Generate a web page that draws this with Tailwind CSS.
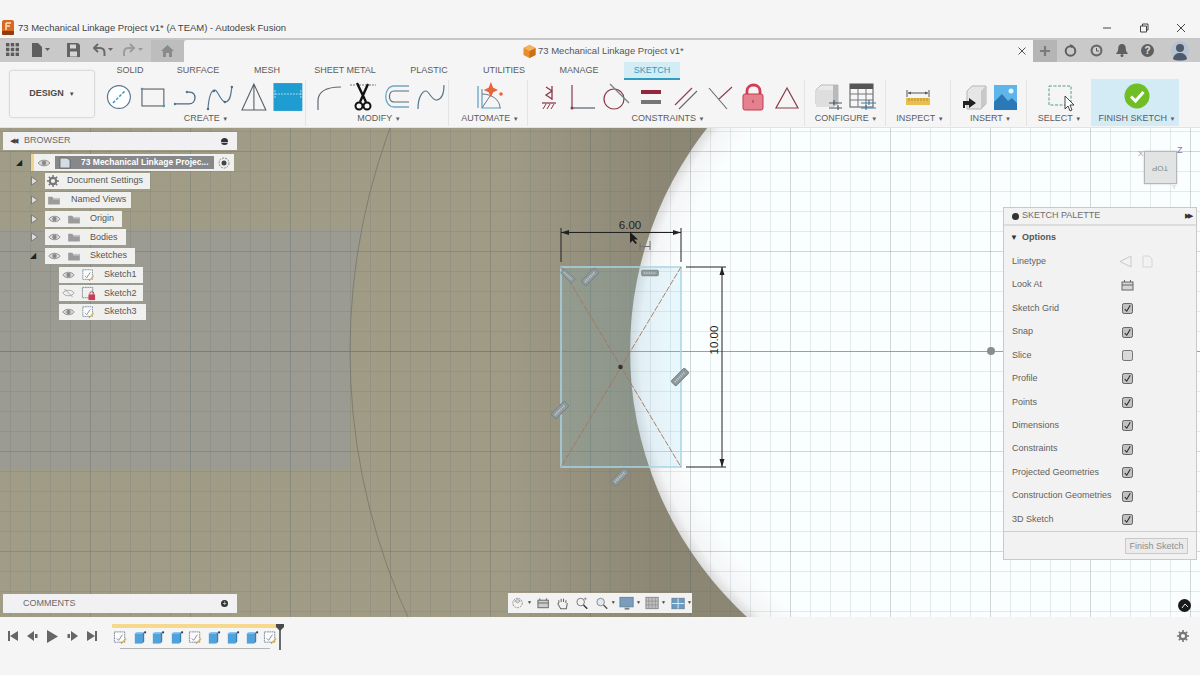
<!DOCTYPE html>
<html lang="en">
<head>
<meta charset="UTF-8">
<title>Autodesk Fusion</title>
<script src="https://cdn.jsdelivr.net/npm/@tailwindcss/browser@4"></script>
</head>
<body class="m-0 w-[1200px] h-[675px] overflow-hidden bg-[#f5f5f5] font-['Liberation_Sans',Arial,sans-serif] text-[#5a5a5a] flex flex-col">

<!-- shared symbols -->
<svg class="hidden">
  <defs>
    <symbol id="eye" viewBox="0 0 16 12"><path d="M1 6c3-4.500 11-4.500 14 0c-3 4.500-11 4.500-14 0z" fill="#d8d8d8" stroke="#8a8a8a" stroke-width="1.100"/><circle cx="8" cy="6" r="2.700" fill="#8a8a8a"/></symbol>
    <symbol id="folder" viewBox="0 0 16 12"><path d="M1 2h5l1 1.500h8v8H1z" fill="#9b9b9b"/><path d="M7 3.500h8v2H7z" fill="#c4c4c4"/></symbol>
    <symbol id="sk" viewBox="0 0 16 16"><rect x="1.500" y="2" width="11" height="11" fill="#fbfbfb" stroke="#7d8b99" stroke-dasharray="2 .6"/><path d="M4 9l2 2 4-6" fill="none" stroke="#7d8b99"/><path d="M9 13l4.500-4.500 1 1L10 14z" fill="#e4b44a"/><path d="M9 13l-.5 1.500L10 14z" fill="#444"/></symbol>
    <symbol id="cb" viewBox="0 0 12 12"><rect x=".5" y=".5" width="11" height="11" rx="2" fill="#c2c2c2" stroke="#555"/><path d="M3 6.500l2.200 2.500L9 2.500" fill="none" stroke="#222" stroke-width="1.100"/></symbol>
    <symbol id="cube" viewBox="0 0 16 16"><path d="M3 3.500h8v11H3z" fill="#4fa3dc"/><path d="M11 3.500l2-1.500v10.500l-2 2z" fill="#2f7fb8"/><path d="M3 3.500L5 2h8l-2 1.500z" fill="#88c4ec"/><rect x="13" y="1.500" width="2" height="2" fill="#333"/></symbol>
    <symbol id="glyph" viewBox="0 0 20 8"><rect x=".5" y=".5" width="19" height="7" rx="1.500" fill="#8f9a9c" stroke="#7a8588"/><path d="M3 4h14" stroke="#c5cdd0" stroke-dasharray="1 1" stroke-width="2"/></symbol>
  </defs>
</svg>

<!-- title bar -->
<div class="h-[38px] shrink-0 flex items-end pb-[3px] pl-[2px] pr-[14px]">
  <svg class="w-[12px] h-[15px] mr-[4px]" viewBox="0 0 12 15"><rect width="12" height="15" rx="2" fill="#d9691e"/><rect y="11" width="12" height="4" rx="1" fill="#8f3c10"/><path d="M4 3h5M4 3v7M4 6h4" stroke="#fbe2c8" stroke-width="1.500"/></svg>
  <span class="text-[9.500px] leading-[15px] text-[#444]">73 Mechanical Linkage Project v1* (A TEAM) - Autodesk Fusion</span>
  <div class="ml-auto flex items-center gap-[27px] mb-[2px]">
    <svg class="w-[10px] h-[10px]" viewBox="0 0 10 10"><path d="M1 5h8" stroke="#444"/></svg>
    <svg class="w-[10px] h-[10px]" viewBox="0 0 10 10"><path d="M1.500 3h6v6h-6zM3.500 3V1h5.500v6H7.500" fill="none" stroke="#444"/></svg>
    <svg class="w-[10px] h-[10px]" viewBox="0 0 10 10"><path d="M1 1l8 8M9 1l-8 8" stroke="#444"/></svg>
  </div>
</div>

<!-- quick access + tab -->
<div class="h-[24px] shrink-0 bg-[#c9c9c9] border-t-[2px] border-[#c6c6c6] flex">
  <div class="w-[151px] flex items-center relative">
    <svg class="absolute left-[6px] top-[3px] w-[13px] h-[13px]" viewBox="0 0 13 13" fill="#5c5c5c"><rect width="3.400" height="3.400"/><rect x="4.800" width="3.400" height="3.400"/><rect x="9.600" width="3.400" height="3.400"/><rect y="4.800" width="3.400" height="3.400"/><rect x="4.800" y="4.800" width="3.400" height="3.400"/><rect x="9.600" y="4.800" width="3.400" height="3.400"/><rect y="9.600" width="3.400" height="3.400"/><rect x="4.800" y="9.600" width="3.400" height="3.400"/><rect x="9.600" y="9.600" width="3.400" height="3.400"/></svg>
    <svg class="absolute left-[32px] top-[2px] w-[20px] h-[16px]" viewBox="0 0 20 16"><path d="M0 1h6l4 4v10H0z" fill="#5f5f5f"/><path d="M13 6h5l-2.500 3z" fill="#5f5f5f"/></svg>
    <svg class="absolute left-[67px] top-[3px] w-[13px] h-[14px]" viewBox="0 0 13 14"><path d="M0 0h11l2 2v12H0z" fill="#646464"/><rect x="3" y="1.500" width="6" height="4" fill="#d6d6d6"/><rect x="3" y="8.500" width="7" height="5" fill="#d6d6d6"/></svg>
    <svg class="absolute left-[93px] top-[3px] w-[22px] h-[14px]" viewBox="0 0 22 14"><path d="M5 1L1 5l4 4M1 5h6c3 0 4.500 2 4.500 5v3" fill="none" stroke="#6a6a6a" stroke-width="2"/><path d="M15 5h5l-2.500 3z" fill="#6a6a6a"/></svg>
    <svg class="absolute left-[123px] top-[3px] w-[22px] h-[14px]" viewBox="0 0 22 14"><path d="M7 1l4 4-4 4M11 5H5C2 5 1 7 1 10v3" fill="none" stroke="#9c9c9c" stroke-width="2"/><path d="M15 5h5l-2.500 3z" fill="#9c9c9c"/></svg>
  </div>
  <div class="w-[33px] bg-[#bdbdbd] flex items-center justify-center">
    <svg class="w-[13px] h-[12px]" viewBox="0 0 13 12"><path d="M6.500 0L13 6h-2v6H8V8H5v4H2V6H0z" fill="#8a8a8a"/></svg>
  </div>
  <div class="w-[849px] bg-[#f5f5f5] rounded-tl-[3px] relative flex items-center pl-[339px]">
    <svg class="w-[13px] h-[13px] mr-[2px]" viewBox="0 0 13 13"><path d="M6.500 0l6 3v7l-6 3-6-3V3z" fill="#e98d2c"/><path d="M6.500 6l6-3v7l-6 3z" fill="#c96f17"/><path d="M6.500 0l6 3-6 3-6-3z" fill="#f4b15f"/></svg>
    <span class="text-[9.500px] text-[#555]">73 Mechanical Linkage Project v1*</span>
    <svg class="absolute right-[7px] top-[7px] w-[8px] h-[8px]" viewBox="0 0 8 8"><path d="M.5.500l7 7M7.500.500l-7 7" stroke="#555"/></svg>
  </div>
  <div class="flex-1 flex items-center relative">
    <div class="w-[24px] h-full bg-[#b5b5b5] flex items-center justify-center">
      <svg class="w-[12px] h-[12px]" viewBox="0 0 12 12"><path d="M6 1v10M1 6h10" stroke="#7a7a7a" stroke-width="2.200"/></svg>
    </div>
    <svg class="absolute left-[31px] top-[4px] w-[13px] h-[13px]" viewBox="0 0 13 13"><circle cx="6.500" cy="7" r="4.800" fill="none" stroke="#5f5f5f" stroke-width="2"/><path d="M6 0l4 2-3 2z" fill="#5f5f5f"/></svg>
    <svg class="absolute left-[57px] top-[4px] w-[13px] h-[13px]" viewBox="0 0 13 13"><circle cx="6.500" cy="6.500" r="6" fill="#6a6a6a"/><circle cx="6.500" cy="6.500" r="3.800" fill="#d0d0d0"/><path d="M6.500 4v3h2.500" stroke="#555" fill="none"/></svg>
    <svg class="absolute left-[83px] top-[4px] w-[12px] h-[13px]" viewBox="0 0 12 13"><path d="M6 0c3 0 3.800 2.500 3.800 5 0 3 2.200 4 2.200 5H0c0-1 2.200-2 2.200-5C2.200 2.500 3 0 6 0z" fill="#5f5f5f"/><circle cx="6" cy="11.500" r="1.500" fill="#5f5f5f"/></svg>
    <div class="absolute left-[108px] top-[4px] w-[13px] h-[13px] rounded-full bg-[#5f5f5f] text-[#e4e4e4] text-[10px] leading-[13px] font-bold text-center">?</div>
    <svg class="absolute left-[138px] top-[1px] w-[18px] h-[20px]" viewBox="0 0 18 20"><ellipse cx="9" cy="10" rx="9" ry="10" fill="#b7c3d2"/><circle cx="9" cy="7" r="4" fill="#4d5a6c"/><path d="M2 18c1-5 4-6 7-6s6 1 7 6c-2 2-12 2-14 0z" fill="#4d5a6c"/></svg>
  </div>
</div>

<!-- toolbar -->
<div class="h-[66px] shrink-0 relative flex pl-[9px] pb-[1px] border-b border-[#e2e2e2]">
  <div class="w-[86px] h-[48px] mt-[8px] rounded-[3px] border border-[#dadada] shadow-[0_0_2px_rgba(0,0,0,.08)] flex items-center justify-center text-[9px] font-bold text-[#4a4a4a]">DESIGN<span class="ml-[5px] text-[6px]">▼</span></div>
  <div class="flex-1 ml-[-1px] pl-[8px] flex flex-col">
    <!-- tabs -->
    <div class="h-[18px] flex items-center text-[9px] text-[#5c5c5c] text-center ml-[-6px]">
      <div class="w-[68px]">SOLID</div>
      <div class="w-[68px]">SURFACE</div>
      <div class="w-[70px]">MESH</div>
      <div class="w-[86px]">SHEET METAL</div>
      <div class="w-[82px]">PLASTIC</div>
      <div class="w-[68px]">UTILITIES</div>
      <div class="w-[82px]">MANAGE</div>
      <div class="ml-[4px] w-[56px] h-[18px] bg-[#d2edf5] border-b-[2px] border-[#2f9dbd] text-[#2a9fbe] leading-[17px]">SKETCH</div>
    </div>
    <!-- groups -->
    <div class="flex h-[47px] text-[9px] text-[#5c5c5c]">
      <div class="w-[204px] border-r border-[#e4e4e4]">
        <div class="flex h-[33px] items-center">
          <svg class="w-[34px] h-[30px]" viewBox="0 0 34 30"><circle cx="17" cy="15" r="11.500" fill="#fff" stroke="#56788e" stroke-width="1.200"/><path d="M11 21L23 9" stroke="#3d9ac9" stroke-width="1.500" stroke-dasharray="3 1.500"/></svg>
          <svg class="w-[34px] h-[30px]" viewBox="0 0 34 30"><rect x="6" y="7" width="22" height="17" fill="none" stroke="#56606a" stroke-width="1.100"/><g fill="#5c93b3"><circle cx="6" cy="7" r="1.300"/><circle cx="28" cy="24" r="1.300"/></g></svg>
          <svg class="w-[34px] h-[30px]" viewBox="0 0 34 30"><path d="M5 22h14c8 0 8-12 1-12h-3" fill="none" stroke="#4d6b82" stroke-width="1.300"/><circle cx="5" cy="22" r="1.200" fill="#4d7a9a"/><circle cx="17" cy="10" r="1.200" fill="#4d7a9a"/></svg>
          <svg class="w-[34px] h-[30px]" viewBox="0 0 34 30"><path d="M5 27C6 12 9 8 12 8s6 13 11 12 5-9 6-15" fill="none" stroke="#56788e" stroke-width="1.200"/><g fill="#4d6b82"><circle cx="5" cy="27" r="1.200"/><circle cx="11" cy="9" r="1.200"/><circle cx="22" cy="20" r="1.200"/><circle cx="29" cy="5" r="1.200"/></g></svg>
          <svg class="w-[34px] h-[30px]" viewBox="0 0 34 30"><path d="M17 2L5 28h24zM17 2v26" fill="none" stroke="#56606a" stroke-width="1.100"/></svg>
          <svg class="w-[34px] h-[30px]" viewBox="0 0 34 30"><rect x="2.500" y="1" width="29" height="28" fill="#1f9dd0"/><path d="M4 12h26M4 8v8M30 8v8" stroke="#cbe8f4" stroke-width=".8" stroke-dasharray="2 1"/></svg>
        </div>
        <div class="text-center pl-[5px] leading-[10px]">CREATE <span class="text-[6px]">▼</span></div>
      </div>
      <div class="w-[143px] pl-[6px] border-r border-[#e4e4e4]">
        <div class="flex h-[33px] items-center">
          <svg class="w-[34px] h-[30px]" viewBox="0 0 34 30"><path d="M6 28V19C6 10 13 5 29 5" fill="none" stroke="#5f6a72" stroke-width="1.200"/></svg>
          <svg class="w-[34px] h-[30px]" viewBox="0 0 34 30"><path d="M4 3h6M13 3h7M23 3h7" stroke="#777" stroke-dasharray="2 1"/><path d="M11 1l9 19M22 2l-8 18" stroke="#111" stroke-width="2.400"/><circle cx="13" cy="24" r="3.500" fill="none" stroke="#111" stroke-width="2"/><circle cx="21" cy="24" r="3.500" fill="none" stroke="#111" stroke-width="2"/></svg>
          <svg class="w-[34px] h-[30px]" viewBox="0 0 34 30"><path d="M29 4H14C3 4 3 25 14 25h15" fill="none" stroke="#6da8c6" stroke-width="1.300"/><path d="M29 9H14C8 9 8 20 14 20h15" fill="none" stroke="#5f6a72" stroke-width="1.200"/></svg>
          <svg class="w-[34px] h-[30px]" viewBox="0 0 34 30"><path d="M4 27C4 14 9 9 12 9s6 10 11 9 7-8 7-15" fill="none" stroke="#56788e" stroke-width="1.200"/></svg>
        </div>
        <div class="text-center pr-[2px] leading-[10px]">MODIFY <span class="text-[6px]">▼</span></div>
      </div>
      <div class="w-[79px] border-r border-[#e4e4e4]">
        <div class="flex h-[33px] items-center justify-center">
          <svg class="w-[34px] h-[30px]" viewBox="0 0 34 30"><path d="M7 4v22M11 7v19h19" fill="none" stroke="#5a9ec2" stroke-width="1.200"/><path d="M11 12c10 0 18 6 18 14" fill="none" stroke="#6a7a86"/><path d="M11 26l8-12" stroke="#6a7a86"/><path d="M21 1l2.500 6.500L29 10l-5.500 2.500L21 18l-2.500-5.500L13 10l5.500-2.500z" fill="#e8643c" transform="translate(1 -1) scale(.9)"/><circle cx="30" cy="12" r="1.800" fill="#e8643c"/></svg>
        </div>
        <div class="text-center pl-[4px] leading-[10px]">AUTOMATE <span class="text-[6px]">▼</span></div>
      </div>
      <div class="w-[277px] pl-[4px] border-r border-[#e4e4e4]">
        <div class="flex h-[33px] items-center">
          <svg class="w-[34px] h-[30px]" viewBox="0 0 34 30"><path d="M14 5l6 4-6 4 6 4M20 4v14" fill="none" stroke="#8c3a4a" stroke-width="1.300"/><path d="M10 21h14" stroke="#8c3a4a" stroke-width="1.300"/><path d="M11 27l3-5M15 27l3-5M19 27l3-5" stroke="#8c3a4a"/></svg>
          <svg class="w-[34px] h-[30px]" viewBox="0 0 34 30"><path d="M6 3v23" stroke="#8c3a4a" stroke-width="1.200"/><path d="M6 26h23" stroke="#56606a" stroke-width="1.200"/><circle cx="6" cy="26" r="1.500" fill="#8c3a4a"/></svg>
          <svg class="w-[34px] h-[30px]" viewBox="0 0 34 30"><circle cx="14" cy="17" r="10" fill="none" stroke="#8c3a4a" stroke-width="1.200"/><path d="M10 2l19 19" stroke="#7a7f85" stroke-width="1.200"/></svg>
          <svg class="w-[34px] h-[30px]" viewBox="0 0 34 30"><rect x="7" y="8" width="20" height="4" fill="#96263a"/><rect x="7" y="18" width="20" height="4" fill="#767676"/></svg>
          <svg class="w-[34px] h-[30px]" viewBox="0 0 34 30"><path d="M7 23L24 6" stroke="#8c3a4a" stroke-width="1.100"/><path d="M11 27L29 9" stroke="#66686c" stroke-width="1.100"/></svg>
          <svg class="w-[34px] h-[30px]" viewBox="0 0 34 30"><path d="M7 6l18 21" stroke="#66686c" stroke-width="1.100"/><path d="M17 17L30 5" stroke="#8c3a4a" stroke-width="1.100"/></svg>
          <svg class="w-[34px] h-[30px]" viewBox="0 0 34 30"><path d="M11 13V9c0-8 13-8 13 0v4" fill="none" stroke="#cf3f57" stroke-width="2.800"/><rect x="7" y="12" width="20" height="16" rx="2" fill="#e5808f" stroke="#c53b52"/><path d="M17 18v3" stroke="#a03246"/></svg>
          <svg class="w-[34px] h-[30px]" viewBox="0 0 34 30"><path d="M17 6L6 26h22z" fill="none" stroke="#8c3a4a" stroke-width="1.200"/></svg>
        </div>
        <div class="text-center leading-[10px]">CONSTRAINTS <span class="text-[6px]">▼</span></div>
      </div>
      <div class="w-[81px] pl-[6px] border-r border-[#e4e4e4]">
        <div class="flex h-[33px] items-center">
          <svg class="w-[34px] h-[30px]" viewBox="0 0 34 30"><path d="M5 8l5-5h17v19H5z" fill="#e9e9e9" stroke="#bcbcbc"/><path d="M22 3h5v19l-5 3z" fill="#b9b9b9"/><path d="M5 8h17v17H5z" fill="#dedede"/><path d="M18 21h13M18 26h13M23 18v5M27 23v5" stroke="#4a5a66" stroke-width="1.200"/></svg>
          <svg class="w-[34px] h-[30px]" viewBox="0 0 34 30"><rect x="5" y="2" width="23" height="23" fill="#f6f6f6" stroke="#555"/><rect x="5" y="2" width="23" height="5" fill="#555"/><path d="M5 12h23M5 18h23M13 7v18M21 7v18" stroke="#777"/><path d="M16 21h15M16 26h15M24 18v5M21 23v5" stroke="#3a7ba0" stroke-width="1.200"/></svg>
        </div>
        <div class="text-center pr-[4px] leading-[10px]">CONFIGURE <span class="text-[6px]">▼</span></div>
      </div>
      <div class="w-[65px] border-r border-[#e4e4e4]">
        <div class="flex h-[33px] items-center justify-center">
          <svg class="w-[34px] h-[30px]" viewBox="0 0 34 30"><path d="M6 8v7M28 8v7M7 11h20" stroke="#555"/><path d="M7 11l3-1.500v3zM27 11l-3-1.500v3z" fill="#555"/><rect x="5" y="16" width="24" height="7" fill="#e8bf4f"/><path d="M8 16v3M11 16v3M14 16v3M17 16v3M20 16v3M23 16v3M26 16v3" stroke="#a07d20" stroke-width=".7"/></svg>
        </div>
        <div class="text-center pl-[4px] leading-[10px]">INSPECT <span class="text-[6px]">▼</span></div>
      </div>
      <div class="w-[76px] pl-[7px] border-r border-[#e4e4e4]">
        <div class="flex h-[33px] items-center">
          <svg class="w-[32px] h-[30px]" viewBox="0 0 32 30"><path d="M9 9l5-5h14v18l-5 5H9z" fill="#e6e6e6" stroke="#b5b5b5"/><path d="M23 9l5-5v18l-5 5z" fill="#c8c8c8"/><path d="M5 26v-7h6v-3l7 5-7 5v-3H7v3z" fill="#222"/></svg>
          <svg class="w-[32px] h-[30px]" viewBox="0 0 32 30"><rect x="4" y="3" width="23" height="25" fill="#5eb5ea"/><path d="M4 28V20l8-8 6 7 4-3 5 5v7z" fill="#2a78b5"/><circle cx="21" cy="9" r="2.500" fill="#e4f3fc"/></svg>
        </div>
        <div class="text-center pr-[3px] leading-[10px]">INSERT <span class="text-[6px]">▼</span></div>
      </div>
      <div class="w-[64px] relative">
        <div class="flex h-[33px] items-center justify-center">
          <svg class="w-[34px] h-[30px]" viewBox="0 0 34 30"><rect x="7" y="4" width="22" height="19" fill="none" stroke="#57a07a" stroke-dasharray="3 1.500"/><path d="M23 14v13l3-3 2 5 2-1-2-5h4z" fill="#fff" stroke="#333" stroke-width=".9"/></svg>
        </div>
        <div class="text-center pl-[1px] leading-[10px]">SELECT <span class="text-[6px]">▼</span></div>
      </div>
      <div class="w-[88px] bg-[#d3ebf5] mt-[-1px]">
        <div class="flex h-[34px] items-center justify-center pl-[3px]">
          <svg class="w-[26px] h-[26px]" viewBox="0 0 26 26"><circle cx="13" cy="13" r="12.500" fill="#6fbe25"/><path d="M7 13.500l4.500 4.500L19.500 9" fill="none" stroke="#fff" stroke-width="3"/></svg>
        </div>
        <div class="text-center pl-[4px] leading-[10px] whitespace-nowrap">FINISH SKETCH <span class="text-[6px]">▼</span></div>
      </div>
    </div>
  </div>
</div>

<!-- canvas -->
<div class="h-[489px] shrink-0 relative overflow-hidden bg-[#a09b85]">
  <svg class="absolute inset-0 w-[1200px] h-[489px]" viewBox="0 128 1200 489">
    <defs>
      <linearGradient id="bgh" x1="0" x2="1200" y1="0" y2="0" gradientUnits="userSpaceOnUse">
        <stop offset="0" stop-color="#a09c86"/><stop offset=".42" stop-color="#a09b85"/><stop offset=".55" stop-color="#8c8775"/>
      </linearGradient>
      <radialGradient id="lit" cx="991" cy="351" r="361" gradientUnits="userSpaceOnUse">
        <stop offset="0" stop-color="#fbfefe"/><stop offset=".9" stop-color="#fbfefe"/><stop offset=".97" stop-color="#f4f5f6"/><stop offset="1" stop-color="#dcdcdc"/>
      </radialGradient>
      <pattern id="minor" width="20" height="20" x="10" y="11" patternUnits="userSpaceOnUse"><path d="M.5 0v20M0 .5h20" stroke="#3a5a60" stroke-opacity=".12" fill="none"/></pattern>
      <pattern id="major" width="100" height="100" x="90" y="51" patternUnits="userSpaceOnUse"><path d="M.5 0v100M0 .5h100" stroke="#3a5058" stroke-opacity=".13" fill="none"/></pattern>
    </defs>
    <rect x="0" y="128" width="1200" height="489" fill="url(#bgh)"/>
    <path d="M0 230H362A641 641 0 0 0 350 351V470H0Z" fill="#9b9b92"/>
    <circle cx="991" cy="351" r="361" fill="url(#lit)"/>
    <rect x="0" y="128" width="1200" height="489" fill="url(#minor)"/>
    <rect x="0" y="128" width="1200" height="489" fill="url(#major)"/>
    <circle cx="991" cy="351" r="641" fill="none" stroke="#77766a" stroke-opacity=".8"/>
    <path d="M0 351.500H1200" stroke="#a0605c" stroke-opacity=".55"/>
    <circle cx="991" cy="351" r="4" fill="#8c8c8c"/>

    <!-- sketch profile -->
    <rect x="561" y="267" width="120" height="200" fill="#82d2f0" fill-opacity=".15" stroke="#a8d5e5" stroke-width="1.500"/>
    <path d="M561 267L681 467M681 267L561 467" stroke="#a8735c" stroke-opacity=".9" stroke-dasharray="6 1.500"/>
    <circle cx="620.500" cy="367" r="2.300" fill="#333"/>
    <use href="#glyph" width="16" height="7" transform="translate(568 276) rotate(42) translate(-8 -3.500)"/>
    <use href="#glyph" width="20" height="8" transform="translate(590 277) rotate(-45) translate(-10 -4)"/>
    <use href="#glyph" width="18" height="7" transform="translate(650 273) translate(-9 -3.500)"/>
    <use href="#glyph" width="20" height="8" transform="translate(680 377) rotate(-45) translate(-10 -4)"/>
    <use href="#glyph" width="20" height="8" transform="translate(560 410) rotate(-45) translate(-10 -4)"/>
    <use href="#glyph" width="20" height="8" transform="translate(620 477) rotate(-45) translate(-10 -4)"/>

    <!-- dimensions -->
    <g stroke="#222" fill="none">
      <path d="M561 228v34M681 228v34M561 232.500h120"/>
      <path d="M686 267h40M686 467h40M722 267v200"/>
    </g>
    <path d="M561 232.500l8-2.500v5zM681 232.500l-8-2.500v5zM722 267l-2.500 8h5zM722 467l-2.500-8h5z" fill="#222"/>
    <text x="630" y="229" text-anchor="middle" font-size="11.500" fill="#222">6.00</text>
    <text transform="translate(718 340) rotate(-90)" text-anchor="middle" font-size="11.500" fill="#222">10.00</text>
    <path d="M630 232v11l2.500-2.500 3 3.500 1.500-1-3-3.500h4z" fill="#1b1b1b"/>
    <path d="M640 243v7M650 241v9M640 246.500h10" stroke="#6f6f6f" fill="none"/>
  </svg>

  <!-- browser panel -->
  <div class="absolute left-[3px] top-[4px] w-[234px] text-[9px] text-[#555]">
    <div class="h-[18px] bg-[#f1f1f3] flex items-center pl-[7px] pr-[9px] text-[9px] text-[#6a6a6a]">
      <span class="text-[7px] mr-[5px] tracking-[-2px] text-[#444]">◀◀</span><span class="ml-[3px]">BROWSER</span>
      <span class="ml-auto w-[7px] h-[7px] rounded-full bg-[#333] border-t-[2px] border-[#333] flex items-center"><span class="w-full h-[1px] bg-[#bbb]"></span></span>
    </div>
    <div class="mt-[4px]">
      <div class="flex items-center h-[17px] mb-[1.700px] ml-[12px]">
        <span class="w-[16px] text-[8px] text-[#222] pl-[1px]">◢</span>
        <div class="w-[203px] h-[17px] bg-[#f0f0ee] border-l-[3px] border-[#f1d38c] flex items-center">
          <svg class="w-[14px] h-[10px] ml-[3px]"><use href="#eye"/></svg>
          <div class="ml-[4px] h-[13px] w-[159px] bg-[#86888a] flex items-center text-white font-bold pl-[4px] whitespace-nowrap">
            <svg class="w-[12px] h-[12px] shrink-0" viewBox="0 0 12 12"><path d="M1 1h7l3 2v8H1z" fill="#d5dbe2" stroke="#555" stroke-width=".7"/></svg>
            <span class="ml-[10px] text-[8.500px]">73 Mechanical Linkage Projec...</span>
          </div>
          <svg class="w-[12px] h-[12px] ml-[4px]" viewBox="0 0 12 12"><circle cx="6" cy="6" r="5" fill="#eee" stroke="#888" stroke-dasharray="2 1"/><circle cx="6" cy="6" r="2.500" fill="#444"/></svg>
        </div>
      </div>

      <div class="flex items-center h-[17px] mb-[1.700px] ml-[27px]">
        <svg class="w-[15px] h-[10px]" viewBox="0 0 15 10"><path d="M1.500 1l6 4-6 4z" fill="#ddd" stroke="#666" stroke-width=".7"/></svg>
        <div class="w-[105px] h-[16px] bg-[#f0f0ee] flex items-center">
          <svg class="w-[12px] h-[12px] ml-[2px]" viewBox="0 0 12 12"><circle cx="6" cy="6" r="3.200" fill="none" stroke="#777" stroke-width="2.200"/><path d="M6 0v2.500M6 9.500V12M0 6h2.500M9.500 6H12M1.800 1.800l1.700 1.700M8.500 8.500l1.700 1.700M1.800 10.200l1.700-1.700M8.500 3.500l1.700-1.700" stroke="#777" stroke-width="1.500"/></svg>
          <span class="ml-[8px] whitespace-nowrap">Document Settings</span>
        </div>
      </div>
      <div class="flex items-center h-[17px] mb-[1.700px] ml-[27px]">
        <svg class="w-[15px] h-[10px]" viewBox="0 0 15 10"><path d="M1.500 1l6 4-6 4z" fill="#ddd" stroke="#666" stroke-width=".7"/></svg>
        <div class="w-[86px] h-[16px] bg-[#f0f0ee] flex items-center">
          <svg class="w-[14px] h-[10px] ml-[2px]"><use href="#folder"/></svg>
          <span class="ml-[10px] whitespace-nowrap">Named Views</span>
        </div>
      </div>
      <div class="flex items-center h-[17px] mb-[1.700px] ml-[27px]">
        <svg class="w-[15px] h-[10px]" viewBox="0 0 15 10"><path d="M1.500 1l6 4-6 4z" fill="#ddd" stroke="#666" stroke-width=".7"/></svg>
        <div class="w-[77px] h-[16px] bg-[#f0f0ee] flex items-center">
          <svg class="w-[13px] h-[10px] ml-[3px]"><use href="#eye"/></svg>
          <svg class="w-[14px] h-[10px] ml-[6px]"><use href="#folder"/></svg>
          <span class="ml-[9px]">Origin</span>
        </div>
      </div>
      <div class="flex items-center h-[17px] mb-[1.700px] ml-[27px]">
        <svg class="w-[15px] h-[10px]" viewBox="0 0 15 10"><path d="M1.500 1l6 4-6 4z" fill="#ddd" stroke="#666" stroke-width=".7"/></svg>
        <div class="w-[81px] h-[16px] bg-[#f0f0ee] flex items-center">
          <svg class="w-[13px] h-[10px] ml-[3px]"><use href="#eye"/></svg>
          <svg class="w-[14px] h-[10px] ml-[6px]"><use href="#folder"/></svg>
          <span class="ml-[9px]">Bodies</span>
        </div>
      </div>
      <div class="flex items-center h-[17px] mb-[1.700px] ml-[27px]">
        <span class="w-[15px] text-[8px] text-[#222]">◢</span>
        <div class="w-[90px] h-[16px] bg-[#f0f0ee] flex items-center">
          <svg class="w-[13px] h-[10px] ml-[3px]"><use href="#eye"/></svg>
          <svg class="w-[14px] h-[10px] ml-[6px]"><use href="#folder"/></svg>
          <span class="ml-[9px]">Sketches</span>
        </div>
      </div>
      <div class="flex items-center h-[17px] mb-[1.700px] ml-[56px]">
        <div class="w-[84px] h-[16px] bg-[#f0f0ee] flex items-center">
          <svg class="w-[13px] h-[10px] ml-[3px]"><use href="#eye"/></svg>
          <svg class="w-[15px] h-[14px] ml-[6px]"><use href="#sk"/></svg>
          <span class="ml-[8px]">Sketch1</span>
        </div>
      </div>
      <div class="flex items-center h-[17px] mb-[1.700px] ml-[56px]">
        <div class="w-[84px] h-[16px] bg-[#f0f0ee] flex items-center">
          <svg class="w-[13px] h-[10px] ml-[3px]" viewBox="0 0 16 12"><path d="M1 6c3-4.500 11-4.500 14 0c-3 4.500-11 4.500-14 0z" fill="none" stroke="#999"/><path d="M3 1l10 10" stroke="#999"/></svg>
          <svg class="w-[15px] h-[15px] ml-[6px]" viewBox="0 0 16 16"><rect x="1.500" y="1.500" width="11" height="11" fill="none" stroke="#7d8b99" stroke-dasharray="2 .6"/><rect x="8" y="9" width="7" height="6" fill="#c83c54"/><path d="M9.500 9V7.500c0-2 4-2 4 0V9" fill="none" stroke="#c83c54"/></svg>
          <span class="ml-[8px]">Sketch2</span>
        </div>
      </div>
      <div class="flex items-center h-[17px] mb-[1.700px] ml-[56px]">
        <div class="w-[87px] h-[16px] bg-[#f0f0ee] flex items-center">
          <svg class="w-[13px] h-[10px] ml-[3px]"><use href="#eye"/></svg>
          <svg class="w-[15px] h-[14px] ml-[6px]"><use href="#sk"/></svg>
          <span class="ml-[8px]">Sketch3</span>
        </div>
      </div>
    </div>
  </div>

  <!-- comments panel -->
  <div class="absolute left-[3px] top-[466px] w-[234px] h-[19px] bg-[#f1f1f3] flex items-center pl-[20px] pr-[9px] text-[9px] text-[#6a6a6a]">
    COMMENTS
    <span class="ml-auto w-[7px] h-[7px] rounded-full bg-[#333] flex items-center justify-center text-white text-[7px] leading-[7px]">+</span>
  </div>

  <!-- navigation bar -->
  <div class="absolute left-[508px] top-[465px] w-[184px] h-[20px] bg-[#f2f2f2] flex items-center pl-[2px]">
    <svg class="w-[16px] h-[14px]" viewBox="0 0 16 14"><circle cx="8" cy="7" r="5" fill="none" stroke="#888" stroke-dasharray="2 1"/><path d="M8 3l3 2-3 2-3-2z" fill="#d9d9d9" stroke="#777" stroke-width=".6"/></svg>
    <span class="text-[5px] ml-[2px] text-[#444]">▼</span>
    <svg class="w-[13px] h-[12px] ml-[5px]" viewBox="0 0 13 12"><rect x="1" y="3" width="11" height="8" fill="#ccc" stroke="#666"/><path d="M3 3V1M10 3V1M1 6h11" stroke="#666"/></svg>
    <svg class="w-[14px] h-[14px] ml-[7px]" viewBox="0 0 14 14"><path d="M3 7V4M5.500 6V2.500M8 6V2.500M10.500 7V4M3 7l-1 1 3 5h6l1-6" fill="none" stroke="#666" stroke-width="1.100"/></svg>
    <svg class="w-[14px] h-[14px] ml-[6px]" viewBox="0 0 14 14"><circle cx="6" cy="6" r="4" fill="none" stroke="#777"/><path d="M9 9l4 4" stroke="#333" stroke-width="1.500"/><path d="M11 1v3M9.500 2.500h3" stroke="#777" stroke-width=".7"/></svg>
    <svg class="w-[14px] h-[14px] ml-[6px]" viewBox="0 0 14 14"><circle cx="6" cy="6" r="4" fill="#dfe9f0" stroke="#888"/><path d="M9 9l4 4" stroke="#555" stroke-width="1.500"/></svg>
    <span class="text-[5px] ml-[3px] text-[#444]">▼</span>
    <svg class="w-[16px] h-[15px] ml-[3px]" viewBox="0 0 16 15"><rect x="1" y="1" width="14" height="10" fill="#7a9dbd" stroke="#6a8296"/><path d="M6 12h5v2H6z" fill="#7d7d7d"/></svg>
    <span class="text-[5px] ml-[2px] text-[#444]">▼</span>
    <svg class="w-[15px] h-[14px] ml-[4px]" viewBox="0 0 15 14"><rect x="1" y="1" width="13" height="12" fill="#c0c0c0" stroke="#888"/><path d="M4 1v12M7.500 1v12M11 1v12M1 5h13M1 9h13" stroke="#8a8a8a" stroke-width=".7"/></svg>
    <span class="text-[5px] ml-[2px] text-[#444]">▼</span>
    <svg class="w-[15px] h-[13px] ml-[5px]" viewBox="0 0 15 13"><rect x="1" y="1" width="13" height="11" fill="#6a9bc2" stroke="#6a8296"/><path d="M7.500 1v11M1 6.500h13" stroke="#e4eef5"/></svg>
    <span class="text-[5px] ml-[2px] text-[#444]">▼</span>
  </div>

  <!-- view cube -->
  <div class="absolute left-[1138px] top-[17px] w-[48px] h-[48px]">
    <div class="absolute left-[6px] top-[6px] w-[33px] h-[33px] bg-[#e2e4e4] border border-[#b5b7b7] shadow-[0_0_2px_rgba(0,0,0,.2)] flex items-center justify-center">
      <span class="rotate-180 text-[8px] text-[#8a8a8a]">TOP</span>
    </div>
    <span class="absolute left-[0px] top-[3px] text-[8px] text-[#cb8a92]">X</span>
    <span class="absolute left-[39px] top-[-1px] text-[9px] text-[#7878bd]">Z</span>
    <span class="absolute left-[34px] top-[38px] text-[6px] text-[#9fd79f]">Y</span>
  </div>

  <!-- sketch palette -->
  <div class="absolute left-[1003px] top-[79px] w-[194px] h-[353px] bg-[#f2f2f2] border border-[#c9c9c9] flex flex-col text-[9px] text-[#5f5f5f]">
    <div class="h-[18px] shrink-0 flex items-center pl-[8px] pr-[3px] border-b-[2px] border-[#dcdcdc] text-[#6e6e6e]">
      <span class="w-[7px] h-[7px] rounded-full bg-[#333] mr-[3px]"></span>SKETCH PALETTE
      <span class="ml-auto text-[7px] tracking-[-2px] text-[#333] pr-[2px]">▶▶</span>
    </div>
    <div class="h-[24px] shrink-0 flex items-center pl-[6px] font-bold text-[#555]"><span class="text-[8px] mr-[4px] text-[#333]">▼</span>Options</div>
    <div class="flex flex-col pl-[8px]">
      <div class="h-[23.450px] flex items-center"><span class="w-[107px]">Linetype</span>
        <svg class="w-[13px] h-[13px]" viewBox="0 0 13 13"><path d="M12 1v11L1 6.500z" fill="none" stroke="#c8c8c8"/></svg>
        <svg class="w-[13px] h-[13px] ml-[9px]" viewBox="0 0 13 13"><path d="M2 1h6l3 3v8H2z" fill="none" stroke="#d6d6d6"/></svg>
      </div>
      <div class="h-[23.450px] flex items-center"><span class="w-[109px]">Look At</span>
        <svg class="w-[13px] h-[12px]" viewBox="0 0 13 12"><rect x="1" y="3" width="11" height="8" fill="#d5d5d5" stroke="#666"/><path d="M3.500 3V1M9.500 3V1M1 6h11" stroke="#666"/></svg>
      </div>
      <div class="h-[23.450px] flex items-center"><span class="w-[110px]">Sketch Grid</span><svg class="w-[11px] h-[11px]"><use href="#cb"/></svg></div>
      <div class="h-[23.450px] flex items-center"><span class="w-[110px]">Snap</span><svg class="w-[11px] h-[11px]"><use href="#cb"/></svg></div>
      <div class="h-[23.450px] flex items-center"><span class="w-[110px]">Slice</span>
        <svg class="w-[11px] h-[11px]" viewBox="0 0 12 12"><rect x=".5" y=".5" width="11" height="11" rx="2" fill="#d9d9d9" stroke="#666"/></svg>
      </div>
      <div class="h-[23.450px] flex items-center"><span class="w-[110px]">Profile</span><svg class="w-[11px] h-[11px]"><use href="#cb"/></svg></div>
      <div class="h-[23.450px] flex items-center"><span class="w-[110px]">Points</span><svg class="w-[11px] h-[11px]"><use href="#cb"/></svg></div>
      <div class="h-[23.450px] flex items-center"><span class="w-[110px]">Dimensions</span><svg class="w-[11px] h-[11px]"><use href="#cb"/></svg></div>
      <div class="h-[23.450px] flex items-center"><span class="w-[110px]">Constraints</span><svg class="w-[11px] h-[11px]"><use href="#cb"/></svg></div>
      <div class="h-[23.450px] flex items-center"><span class="w-[110px]">Projected Geometries</span><svg class="w-[11px] h-[11px]"><use href="#cb"/></svg></div>
      <div class="h-[23.450px] flex items-center"><span class="w-[110px] whitespace-nowrap">Construction Geometries</span><svg class="w-[11px] h-[11px]"><use href="#cb"/></svg></div>
      <div class="h-[23.450px] flex items-center"><span class="w-[110px]">3D Sketch</span><svg class="w-[11px] h-[11px]"><use href="#cb"/></svg></div>
    </div>
    <div class="mt-auto h-[28px] border-t border-[#cfcfcf] flex items-center justify-end pr-[8px]">
      <div class="w-[63px] h-[16px] bg-[#ebebeb] border border-[#c9c9c9] text-center leading-[14px] text-[#8d8d8d]">Finish Sketch</div>
    </div>
  </div>

  <!-- small status dot -->
  <div class="absolute left-[1178px] top-[471px] w-[13px] h-[13px] rounded-full bg-[#1a1a1a] flex items-center justify-center">
    <svg class="w-[8px] h-[8px]" viewBox="0 0 8 8"><path d="M1 6l3-4 3 3" fill="none" stroke="#eee"/></svg>
  </div>
</div>

<!-- timeline -->
<div class="flex-1 relative flex items-start pl-[8px] pt-[11px]">
  <div class="flex items-center h-[16px] w-[104px] text-[#666]">
    <svg class="w-[10px] h-[10px]" viewBox="0 0 10 10"><path d="M1 0v10" stroke="#666" stroke-width="2"/><path d="M10 0v10L2 5z" fill="#666"/></svg>
    <svg class="w-[11px] h-[10px] ml-[9px]" viewBox="0 0 11 10"><path d="M7 0v10L0 5z" fill="#666"/><rect x="8" y="3" width="2.500" height="4" fill="#666"/></svg>
    <svg class="w-[11px] h-[13px] ml-[9px]" viewBox="0 0 11 13"><path d="M0 0l11 6.500L0 13z" fill="#666"/></svg>
    <svg class="w-[11px] h-[10px] ml-[9px]" viewBox="0 0 11 10"><path d="M4 0v10l7-5z" fill="#666"/><rect x=".5" y="3" width="2.500" height="4" fill="#666"/></svg>
    <svg class="w-[10px] h-[10px] ml-[9px]" viewBox="0 0 10 10"><path d="M9 0v10" stroke="#666" stroke-width="2"/><path d="M0 0v10l8-5z" fill="#666"/></svg>
  </div>
  <div class="relative w-[172px] h-[40px] mt-[-4px]">
    <div class="h-[4px] w-[168px] bg-[#f6d98e]"></div>
    <div class="flex mt-[2px] pl-[1px] gap-[3.700px]">
      <svg class="w-[15px] h-[15px]"><use href="#sk"/></svg>
      <svg class="w-[15px] h-[15px]"><use href="#cube"/></svg>
      <svg class="w-[15px] h-[15px]"><use href="#cube"/></svg>
      <svg class="w-[15px] h-[15px]"><use href="#cube"/></svg>
      <svg class="w-[15px] h-[15px]"><use href="#sk"/></svg>
      <svg class="w-[15px] h-[15px]"><use href="#cube"/></svg>
      <svg class="w-[15px] h-[15px]"><use href="#cube"/></svg>
      <svg class="w-[15px] h-[15px]"><use href="#cube"/></svg>
      <svg class="w-[15px] h-[15px]"><use href="#sk"/></svg>
    </div>
    <div class="absolute left-[8px] top-[22px] w-[150px] h-[3px] border-b border-[#b5b5b5]"></div>
    <svg class="absolute left-[163px] top-[0px] w-[10px] h-[26px]" viewBox="0 0 10 26"><path d="M1 0h8v3L5 7 1 3z" fill="#4a4a4a"/><path d="M5 5v21" stroke="#4a4a4a" stroke-width="1.600"/></svg>
  </div>
  <svg class="absolute right-[11px] top-[13px] w-[12px] h-[12px]" viewBox="0 0 12 12"><circle cx="6" cy="6" r="3.200" fill="none" stroke="#777" stroke-width="2.200"/><path d="M6 0v2.500M6 9.500V12M0 6h2.500M9.500 6H12M1.800 1.800l1.700 1.700M8.500 8.500l1.700 1.700M1.800 10.200l1.700-1.700M8.500 3.500l1.700-1.700" stroke="#777" stroke-width="1.600"/></svg>
</div>

</body>
</html>
